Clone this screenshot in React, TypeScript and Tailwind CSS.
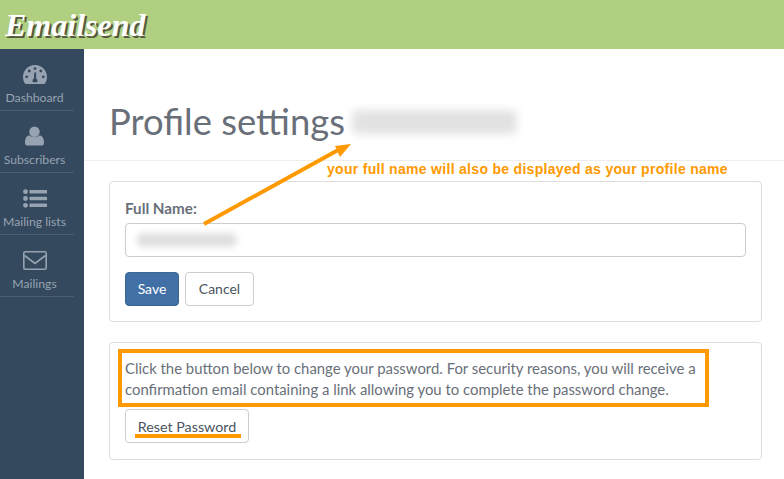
import React from 'react';

const navItems = [
  { label: 'Dashboard', icon: 'gauge' },
  { label: 'Subscribers', icon: 'user' },
  { label: 'Mailing lists', icon: 'list' },
  { label: 'Mailings', icon: 'mail' },
];

function NavIcon({ name }: { name: string }) {
  if (name === 'gauge') {
    return (
      <svg width="24" height="19" viewBox="0 0 24 19" fill="#97a3b1">
        <path d="M12 0C5.4 0 0 5.4 0 12c0 2.4.7 4.7 1.9 6.5.2.3.5.5.9.5h18.4c.4 0 .7-.2.9-.5C23.300 16.700 24 14.400 24 12 24 5.400 18.600 0 12 0z" />
        <g fill="#34495e">
          <circle cx="12" cy="3.600" r="1.400" />
          <circle cx="6.200" cy="6" r="1.400" />
          <circle cx="17.800" cy="6" r="1.400" />
          <circle cx="3.700" cy="11.800" r="1.400" />
          <circle cx="20.300" cy="11.800" r="1.400" />
          <path d="M11.300 7.500h1.900l-.1 6.200c.9.400 1.400 1.200 1.400 2.100 0 .6-.2 1.100-.5 1.500H10c-.3-.4-.5-.9-.5-1.500 0-.9.6-1.700 1.400-2.100z" />
        </g>
      </svg>
    );
  }
  if (name === 'user') {
    return (
      <svg width="19" height="20" viewBox="0 0 20 20" fill="#97a3b1">
        <circle cx="10" cy="5.500" r="5.500" />
        <path d="M0 17c0-5 2-7.500 5-7.500 1.200 1 3 1.700 5 1.700s3.800-.7 5-1.700c3 0 5 2.500 5 7.500 0 2-1.300 3-3 3H3c-1.700 0-3-1-3-3z" />
      </svg>
    );
  }
  if (name === 'list') {
    return (
      <svg width="24" height="19" viewBox="0 0 24 19" fill="#97a3b1">
        <circle cx="2.500" cy="2.700" r="2.400" />
        <circle cx="2.500" cy="9.500" r="2.400" />
        <circle cx="2.500" cy="16.300" r="2.400" />
        <rect x="6.500" y="1" width="17.500" height="3.400" rx=".6" />
        <rect x="6.500" y="7.800" width="17.500" height="3.400" rx=".6" />
        <rect x="6.500" y="14.600" width="17.500" height="3.400" rx=".6" />
      </svg>
    );
  }
  return (
    <svg width="24" height="19" viewBox="0 0 24 19" fill="none" stroke="#97a3b1" strokeWidth="1.600">
      <rect x=".8" y=".8" width="22.400" height="17.400" rx="1.500" />
      <path d="M1.500 4.500L12 12.500l10.500-8" />
    </svg>
  );
}

export default function App() {
  return (
    <div className="relative flex h-[479px] w-[784px] flex-col overflow-hidden bg-white font-['Lato','Open_Sans',sans-serif] text-[14px] text-[#696f79]">
      {/* Top bar */}
      <header className="flex h-[49px] shrink-0 items-center bg-[#b1cf80] pl-[5px]">
        <span className="font-['Liberation_Serif',serif] text-[32px] font-bold italic leading-none text-white [text-shadow:2px_2px_0_#55583f]">
          Emailsend
        </span>
      </header>

      <div className="flex flex-1">
        {/* Sidebar */}
        <aside className="w-[84px] shrink-0 bg-[#34495e]">
          {navItems.map((item) => (
            <div key={item.label} className="flex h-[62px] w-[74px] flex-col items-center border-b border-[#4a5d71] pt-[15px]">
              <div className="ml-[-5px] flex h-[20px] w-[74px] items-center justify-center">
                <NavIcon name={item.icon} />
              </div>
              <span className="mt-[6px] ml-[-5px] text-[12.200px] leading-[16px] whitespace-nowrap text-[#97a3b1]">{item.label}</span>
            </div>
          ))}
        </aside>

        {/* Content */}
        <main className="flex-1 pt-[49px]">
          <div className="flex h-[63px] items-start border-b border-[#eeeeee] pl-[25px]">
            <h1 className="text-[36.400px] leading-[46px] font-normal text-[#696f79]">Profile settings</h1>
            <div className="mt-[12px] ml-[7px] h-[24px] w-[165px] rounded-md bg-[#e2e2e2] blur-[4px]" />
          </div>

          <div className="mt-[20px] mr-[22px] ml-[25px] h-[141px] rounded border border-[#dddddd] px-[15px] pt-[15px]">
            <label className="block text-[15.200px] leading-[22px] font-bold text-[#696f79]">Full Name:</label>
            <div className="mt-[4px] flex h-[34px] items-center rounded border border-[#cccccc] pl-[11px]">
              <div className="h-[14px] w-[100px] rounded-md bg-[#e0e0e0] blur-[3px]" />
            </div>
            <div className="mt-[15px] flex gap-[6px]">
              <button className="h-[34px] w-[54px] rounded border border-[#3b6694] bg-[#4170a6] pb-[1px] text-[14px] text-white">Save</button>
              <button className="h-[34px] w-[69px] rounded border border-[#cccccc] bg-white pb-[1px] text-[14px] text-[#4a5561]">Cancel</button>
            </div>
          </div>

          <div className="mt-[20px] mr-[22px] ml-[25px] h-[118px] rounded border border-[#dddddd] px-[15px] pt-[15px]">
            <p className="text-[14.900px] leading-[21px] whitespace-nowrap text-[#696f79]">
              Click the button below to change your password. For security reasons, you will receive a
              <br />
              confirmation email containing a link allowing you to complete the password change.
            </p>
            <button className="mt-[9px] h-[34px] w-[124px] rounded border border-[#cccccc] bg-white pt-[1px] text-[14.300px] text-[#4a5561]">Reset Password</button>
          </div>
        </main>
      </div>

      {/* Annotations */}
      <svg className="absolute top-0 left-0" width="784" height="479" fill="none">
        <path d="M204 224L340 149" stroke="#ff9900" strokeWidth="4" />
        <path d="M351 144L335 146l5 11z" fill="#ff9900" />
      </svg>
      <span className="absolute top-[160px] left-[327px] font-['Liberation_Sans',sans-serif] text-[14px] leading-[18px] font-bold tracking-[0.3px] whitespace-nowrap text-[#ff9900]">
        your full name will also be displayed as your profile name
      </span>
      <div className="absolute top-[349px] left-[118px] h-[58px] w-[591px] border-[4px] border-[#ff9900]" />
      <div className="absolute top-[434px] left-[135px] h-[4px] w-[106px] bg-[#ff9900]" />
    </div>
  );
}
